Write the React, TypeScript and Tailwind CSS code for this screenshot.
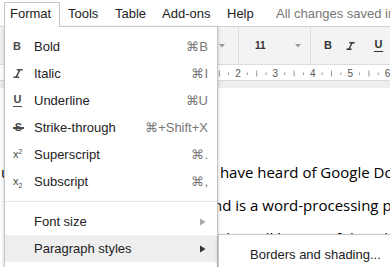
import React from "react";

const Caret = () => (
  <svg width="6" height="4" viewBox="0 0 6 4" className="shrink-0">
    <path d="M0 0H6L3 3.5Z" fill="#9a9a9a" />
  </svg>
);

const Arrow = ({ color }: { color: string }) => (
  <svg width="6" height="8" viewBox="0 0 6 8">
    <path d="M0 0.5L5.5 4L0 7.5Z" fill={color} />
  </svg>
);

function Ruler() {
  const ticks: React.ReactNode[] = [];
  const base = 238;
  const step = 37.4;
  for (let k = -6; k <= 4; k++) {
    const x = base + k * step;
    const n = k + 2;
    if (n > 0) {
      ticks.push(
        <text key={"n" + k} x={x} y={12} fontSize="10" textAnchor="middle" fill="#555" fontFamily="'Liberation Sans', Arial, sans-serif">
          {n}
        </text>
      );
    }
    ticks.push(<line key={"a" + k} x1={x + step / 4} x2={x + step / 4} y1={7.5} y2={10} stroke="#9a9a9a" strokeWidth="1" />);
    ticks.push(<line key={"b" + k} x1={x + step / 2} x2={x + step / 2} y1={5.5} y2={11.5} stroke="#9a9a9a" strokeWidth="1" />);
    ticks.push(<line key={"c" + k} x1={x + (3 * step) / 4} x2={x + (3 * step) / 4} y1={7.5} y2={10} stroke="#9a9a9a" strokeWidth="1" />);
  }
  return (
    <svg width="390" height="15" viewBox="0 0 390 15" className="block">
      {ticks}
    </svg>
  );
}

type Item = { icon?: React.ReactNode; label: string; shortcut?: string; arrow?: "light" | "dark"; active?: boolean };

const iconCls = "text-[#4a4a4a] font-['Liberation_Sans',Arial,sans-serif]";

const items: Item[] = [
  { icon: <span className={iconCls + " text-[11px] font-bold"}>B</span>, label: "Bold", shortcut: "⌘B" },
  {
    icon: (
      <svg width="10" height="9" viewBox="0 0 10 9">
        <path d="M3.8 0.8H9.6M0.4 8.2H6.2M6.8 0.8L3.2 8.2" stroke="#4a4a4a" strokeWidth="1.5" fill="none" />
      </svg>
    ),
    label: "Italic",
    shortcut: "⌘I",
  },
  {
    icon: (
      <span className="flex flex-col items-center">
        <span className={iconCls + " text-[11px] font-bold leading-[10px]"}>U</span>
        <span className="mt-[2px] h-[1.5px] w-[9px] bg-[#4a4a4a]" />
      </span>
    ),
    label: "Underline",
    shortcut: "⌘U",
  },
  {
    icon: (
      <span className="relative flex w-[11px] justify-center">
        <span className={iconCls + " text-[11px] font-bold leading-[11px]"}>S</span>
        <span className="absolute left-0 top-[5px] h-[1.5px] w-[11px] bg-[#4a4a4a]" />
      </span>
    ),
    label: "Strike-through",
    shortcut: "⌘+Shift+X",
  },
  {
    icon: (
      <span className={iconCls + " flex items-start text-[11px] leading-[11px]"}>
        x<span className="text-[7px] leading-[7px] -mt-[1px]">2</span>
      </span>
    ),
    label: "Superscript",
    shortcut: "⌘.",
  },
  {
    icon: (
      <span className={iconCls + " flex items-end text-[11px] leading-[11px]"}>
        x<span className="text-[7px] leading-[7px] -mb-[2px]">2</span>
      </span>
    ),
    label: "Subscript",
    shortcut: "⌘,",
  },
];

function MenuRow({ item }: { item: Item }) {
  return (
    <div className={"flex h-[27px] items-center " + (item.active ? "bg-[#eeeeee]" : "")}>
      <div className="flex w-[29px] shrink-0 items-center pl-[8px]">{item.icon}</div>
      <div className="flex-1 text-[13px] text-[#222]">{item.label}</div>
      {item.shortcut && <div className="pr-[9px] text-[13px] text-[#777]">{item.shortcut}</div>}
      {item.arrow && (
        <div className="pr-[11px]">
          <Arrow color={item.arrow === "light" ? "#a8a8a8" : "#333"} />
        </div>
      )}
    </div>
  );
}

export default function App() {
  return (
    <div className="relative h-[267px] w-[390px] overflow-hidden bg-white font-['Liberation_Sans',Arial,sans-serif]">
      {/* Menu bar */}
      <div className="flex h-[27px] border-b border-[#d4d4d4] text-[13px] leading-[15px] text-[#222]">
        <div className="relative z-30 ml-[4px] mt-[2px] h-[25px] w-[56px] shrink-0 border border-b-0 border-[#c4c4c4] bg-white pl-[5px] pt-[3px]">
          Format
        </div>
        <div className="ml-[8px] w-[47px] shrink-0 pt-[6px]">Tools</div>
        <div className="w-[47px] shrink-0 pt-[6px]">Table</div>
        <div className="w-[65px] shrink-0 pt-[6px]">Add-ons</div>
        <div className="w-[49px] shrink-0 pt-[6px]">Help</div>
        <div className="shrink-0 whitespace-nowrap pt-[6px] text-[#777]">All changes saved in Drive</div>
      </div>

      {/* Toolbar */}
      <div className="flex h-[38px] items-center border-b border-[#dcdcdc] bg-[#f3f3f3]">
        <div className="w-[219px] shrink-0" />
        <Caret />
        <div className="ml-[13px] h-full w-px shrink-0 bg-[#dedede]" />
        <div className="ml-[16px] w-[40px] shrink-0 text-[10px] font-bold text-[#333]">11</div>
        <Caret />
        <div className="ml-[9px] h-full w-px shrink-0 bg-[#dedede]" />
        <div className="ml-[13px] w-[22px] shrink-0 text-[11px] font-bold text-[#333]">B</div>
        <svg width="9" height="8" viewBox="0 0 10 9" className="shrink-0">
          <path d="M3.8 0.8H9.6M0.4 8.2H6.2M6.8 0.8L3.2 8.2" stroke="#333" strokeWidth="1.5" fill="none" />
        </svg>
        <div className="ml-[19px] flex shrink-0 flex-col items-center">
          <span className="text-[11px] font-bold leading-[9px] text-[#333]">U</span>
          <span className="mt-[2px] h-px w-[9px] bg-[#333]" />
        </div>
      </div>

      {/* Ruler */}
      <div className="h-[15px] bg-white">
        <Ruler />
      </div>
      <div className="h-[8px] border-t border-[#dadada] bg-[#eeeeee]" />

      {/* Document */}
      <div className="pt-[68px] font-['Open_Sans',sans-serif] text-[15px] leading-[33px] text-black">
        <div className="flex whitespace-pre">
          <span className="flex w-[216px] shrink-0 justify-end overflow-hidden">
            <span>most users are likely to either use or</span>
          </span>
          <span> have heard of Google Docs.</span>
        </div>
        <div className="flex whitespace-pre">
          <span className="flex w-[213px] shrink-0 justify-end overflow-hidden">
            <span>It runs on the web a</span>
          </span>
          <span>nd is a word-processing program.</span>
        </div>
        <div className="flex whitespace-pre">
          <span className="flex w-[217px] shrink-0 justify-end overflow-hidden">
            <span>If you have not used it yet,</span>
          </span>
          <span> this will be a useful guide for you.</span>
        </div>
      </div>

      {/* Format dropdown */}
      <div className="absolute left-[4px] top-[26px] z-20 w-[214px] border border-[#c4c4c4] bg-white pt-[6px] shadow-[0_2px_4px_rgba(0,0,0,0.2)]">
        {items.map((it) => (
          <MenuRow key={it.label} item={it} />
        ))}
        <div className="my-[6px] h-px bg-[#e5e5e5]" />
        <MenuRow item={{ label: "Font size", arrow: "light" }} />
        <MenuRow item={{ label: "Paragraph styles", arrow: "dark", active: true }} />
        <MenuRow item={{ label: "Align", arrow: "light" }} />
      </div>

      {/* Submenu */}
      <div className="absolute left-[218px] top-[234px] z-30 w-[200px] border border-[#c4c4c4] bg-white pt-[6px] shadow-[0_2px_4px_rgba(0,0,0,0.2)]">
        <div className="flex h-[27px] items-center pl-[31px] text-[13px] text-[#222]">Borders and shading...</div>
      </div>
    </div>
  );
}
